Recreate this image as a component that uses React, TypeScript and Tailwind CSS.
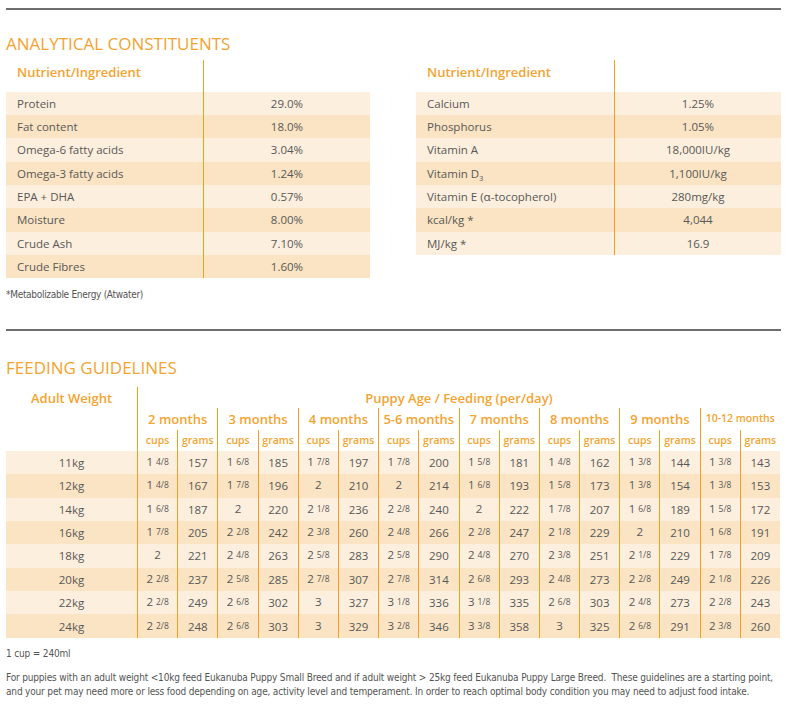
import React from "react";

const leftRows: [string, React.ReactNode][] = [
  ["Protein", "29.0%"],
  ["Fat content", "18.0%"],
  ["Omega-6 fatty acids", "3.04%"],
  ["Omega-3 fatty acids", "1.24%"],
  ["EPA + DHA", "0.57%"],
  ["Moisture", "8.00%"],
  ["Crude Ash", "7.10%"],
  ["Crude Fibres", "1.60%"],
];

const rightRows: [React.ReactNode, string][] = [
  ["Calcium", "1.25%"],
  ["Phosphorus", "1.05%"],
  ["Vitamin A", "18,000IU/kg"],
  [
    <span>
      Vitamin D<sub className="text-[7px] align-[-2px]">3</sub>
    </span>,
    "1,100IU/kg",
  ],
  ["Vitamin E (ɑ-tocopherol)", "280mg/kg"],
  ["kcal/kg *", "4,044"],
  ["MJ/kg *", "16.9"],
];

const months = ["2 months", "3 months", "4 months", "5-6 months", "7 months", "8 months", "9 months", "10-12 months"];

const feed: [string, string[]][] = [
  ["11kg", ["1 4/8", "157", "1 6/8", "185", "1 7/8", "197", "1 7/8", "200", "1 5/8", "181", "1 4/8", "162", "1 3/8", "144", "1 3/8", "143"]],
  ["12kg", ["1 4/8", "167", "1 7/8", "196", "2", "210", "2", "214", "1 6/8", "193", "1 5/8", "173", "1 3/8", "154", "1 3/8", "153"]],
  ["14kg", ["1 6/8", "187", "2", "220", "2 1/8", "236", "2 2/8", "240", "2", "222", "1 7/8", "207", "1 6/8", "189", "1 5/8", "172"]],
  ["16kg", ["1 7/8", "205", "2 2/8", "242", "2 3/8", "260", "2 4/8", "266", "2 2/8", "247", "2 1/8", "229", "2", "210", "1 6/8", "191"]],
  ["18kg", ["2", "221", "2 4/8", "263", "2 5/8", "283", "2 5/8", "290", "2 4/8", "270", "2 3/8", "251", "2 1/8", "229", "1 7/8", "209"]],
  ["20kg", ["2 2/8", "237", "2 5/8", "285", "2 7/8", "307", "2 7/8", "314", "2 6/8", "293", "2 4/8", "273", "2 2/8", "249", "2 1/8", "226"]],
  ["22kg", ["2 2/8", "249", "2 6/8", "302", "3", "327", "3 1/8", "336", "3 1/8", "335", "2 6/8", "303", "2 4/8", "273", "2 2/8", "243"]],
  ["24kg", ["2 2/8", "248", "2 6/8", "303", "3", "329", "3 2/8", "346", "3 3/8", "358", "3", "325", "2 6/8", "291", "2 3/8", "260"]],
];

function Cup({ v }: { v: string }) {
  const [whole, frac] = v.split(" ");
  return (
    <span className="relative -top-[1px]">
      {whole}
      {frac && <span className="ml-[3px] text-[8.5px] align-[1px]">{frac}</span>}
    </span>
  );
}

function NutrientTable({
  rows,
  firstW,
}: {
  rows: [React.ReactNode, React.ReactNode][];
  firstW: string;
}) {
  return (
    <div className="flex flex-col">
      <div className="flex h-[32px]">
        <div className={`${firstW} pl-[11px] text-[13px] leading-[24px] font-semibold text-[#f3a431]`}>
          Nutrient/Ingredient
        </div>
        <div className="flex-1 border-l border-[#f0a020]" />
      </div>
      {rows.map(([a, b], i) => (
        <div
          key={i}
          className={i % 2 === 0 ? "flex h-[23.35px] bg-[#fdefdd]" : "flex h-[23.35px] bg-[#fae4c3]"}
        >
          <div className={`${firstW} pl-[11px] flex items-center`}>{a}</div>
          <div className="flex-1 border-l border-[#f0a020] flex items-center justify-center">{b}</div>
        </div>
      ))}
    </div>
  );
}

const narrow = { fontFamily: '"Liberation Sans Narrow", "DejaVu Sans Condensed", sans-serif' };

export default function App() {
  return (
    <div
      className="w-[789px] h-[704px] bg-white text-[#585858] text-[11.5px] overflow-hidden"
      style={{ fontFamily: '"Open Sans", "Noto Sans", sans-serif' }}
    >
      <div className="pl-[6px] pr-[8px] pt-[8px]">
        <div className="h-[1.5px] bg-[#6e6e6e]" />
        <h1 className="mt-[24px] text-[17px] leading-[20px] text-[#f3a431]">ANALYTICAL CONSTITUENTS</h1>
        <div className="mt-[6px] flex">
          <div className="w-[364px]">
            <NutrientTable rows={leftRows} firstW="w-[197px]" />
          </div>
          <div className="ml-[46px] w-[365px]">
            <NutrientTable rows={rightRows} firstW="w-[198px]" />
          </div>
        </div>
        <div className="mt-[11px] text-[10px] leading-[12px] text-[#555] tracking-[-0.3px]" style={narrow}>
          *Metabolizable Energy (Atwater)
        </div>
        <div className="mt-[28px] h-[1.5px] bg-[#6e6e6e]" />
        <h1 className="mt-[27px] text-[17px] leading-[20px] text-[#f3a431]">FEEDING GUIDELINES</h1>

        <div className="mt-[9px] w-[774px] grid grid-cols-[131px_repeat(16,minmax(0,1fr))]">
          <div className="row-span-3 text-center text-[13px] leading-[22px] font-semibold text-[#f3a431]">
            Adult Weight
          </div>
          <div className="col-span-16 h-[21px] border-l border-[#f0a020] text-center text-[13px] leading-[22px] font-semibold text-[#f3a431]">
            Puppy Age / Feeding (per/day)
          </div>
          {months.map((m) => (
            <div
              key={m}
              className={
                m === "10-12 months"
                  ? "col-span-2 h-[22px] border-l border-[#f0a020] text-center text-[10.5px] leading-[20px] font-semibold text-[#f3a431] whitespace-nowrap"
                  : "col-span-2 h-[22px] border-l border-[#f0a020] text-center text-[13px] leading-[22px] font-semibold text-[#f3a431] whitespace-nowrap"
              }
            >
              {m}
            </div>
          ))}
          {months.map((m) => (
            <React.Fragment key={m}>
              <div className="h-[21px] border-l border-[#f0a020] text-center text-[10.5px] leading-[21px] font-semibold text-[#f3a431]">
                cups
              </div>
              <div className="h-[21px] border-l border-[#f0a020] text-center text-[10.5px] leading-[21px] font-semibold text-[#f3a431]">
                grams
              </div>
            </React.Fragment>
          ))}
          {feed.map(([w, vals], ri) => (
            <React.Fragment key={w}>
              <div
                className={
                  ri % 2 === 0
                    ? "h-[23.4px] bg-[#fdefdd] flex items-center justify-center"
                    : "h-[23.4px] bg-[#fae4c3] flex items-center justify-center"
                }
              >
                {w}
              </div>
              {vals.map((v, ci) => (
                <div
                  key={ci}
                  className={
                    ri % 2 === 0
                      ? "h-[23.4px] bg-[#fdefdd] border-l border-[#f0a020] flex items-center justify-center whitespace-nowrap"
                      : "h-[23.4px] bg-[#fae4c3] border-l border-[#f0a020] flex items-center justify-center whitespace-nowrap"
                  }
                >
                  {ci % 2 === 0 ? <Cup v={v} /> : v}
                </div>
              ))}
            </React.Fragment>
          ))}
        </div>

        <div className="text-[10px] text-[#555] tracking-[-0.17px]" style={narrow}>
          <div className="mt-[10px] leading-[12px]">1 cup = 240ml</div>
          <div className="mt-[11px] leading-[14px]">
            <div className="whitespace-nowrap">
              For puppies with an adult weight &lt;10kg feed Eukanuba Puppy Small Breed and if adult weight &gt; 25kg feed
              Eukanuba Puppy Large Breed.&nbsp; These guidelines are a starting point,
            </div>
            <div className="whitespace-nowrap">
              and your pet may need more or less food depending on age, activity level and temperament. In order to reach
              optimal body condition you may need to adjust food intake.
            </div>
          </div>
        </div>
      </div>
    </div>
  );
}
